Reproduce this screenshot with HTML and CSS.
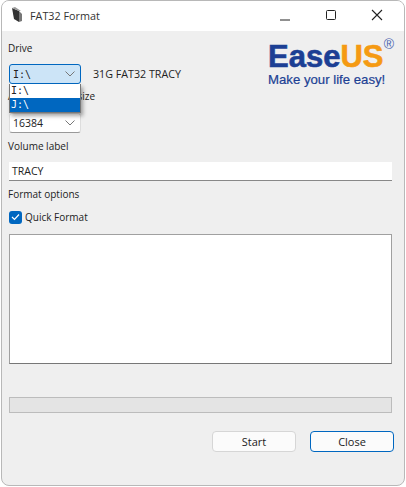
FILE: index.html
```html
<!DOCTYPE html>
<html lang="en">
<head>
    <meta charset="UTF-8">
    <title>FAT32 Format</title>
    <link rel="stylesheet" href="styles.css">
</head>
<body>
    <div class="window">
        <div class="titlebar">
            <svg class="app-icon" width="14" height="16" viewBox="0 0 14 16">
                <path d="M2 1l7 3v11l-5-3z" fill="#333"/>
                <path d="M9 4l3 3v7l-3 1z" fill="#777"/>
                <path d="M2 1l3-1 6 4-2 0z" fill="#999"/>
            </svg>
            <span class="title">FAT32 Format</span>
            <div class="controls">
                <svg width="46" height="16" viewBox="0 0 46 16"><path d="M18 15h10" stroke="#222" stroke-width="1"/></svg>
                <svg width="46" height="16" viewBox="0 0 46 16"><rect x="18.5" y="5.5" width="9" height="9" rx="1" fill="none" stroke="#222"/></svg>
                <svg width="46" height="16" viewBox="0 0 46 16"><path d="M18 5l10 10M28 5l-10 10" stroke="#222" stroke-width="1.1" fill="none"/></svg>
            </div>
        </div>
        <div class="content">
            <div class="top">
                <div class="top-left">
                    <label class="drive-label">Drive</label>
                    <div class="drive-row">
                        <div class="combo-wrap">
                            <div class="combo combo-open">
                                <span class="mono">I:\</span>
                                <svg width="10" height="6" viewBox="0 0 10 6"><path d="M0.5 0.5l4.5 4.5 4.5-4.5" fill="none" stroke="#777"/></svg>
                            </div>
                            <div class="dropdown">
                                <div class="option mono">I:\</div>
                                <div class="option option-on mono">J:\</div>
                            </div>
                        </div>
                        <span class="drive-info">31G FAT32 TRACY</span>
                    </div>
                    <label class="cluster-label">Allocation unit size</label>
                    <div class="combo combo-small">
                        <span>16384</span>
                        <svg width="10" height="6" viewBox="0 0 10 6"><path d="M0.5 0.5l4.5 4.5 4.5-4.5" fill="none" stroke="#777"/></svg>
                    </div>
                </div>
                <div class="logo">
                    <div class="logo-name">Ease<span class="logo-us">US</span><sup class="logo-reg">®</sup></div>
                    <div class="logo-tag">Make your life easy!</div>
                </div>
            </div>
            <label class="volume-label">Volume label</label>
            <div class="text-input">TRACY</div>
            <label class="options-label">Format options</label>
            <div class="check-row">
                <span class="checkbox">
                    <svg width="9" height="8" viewBox="0 0 9 8"><path d="M1 4l2.5 2.5L8 1.5" fill="none" stroke="#fff" stroke-width="1.2"/></svg>
                </span>
                <span>Quick Format</span>
            </div>
            <div class="log-box"></div>
            <div class="progress"></div>
            <div class="buttons">
                <button class="btn">Start</button>
                <button class="btn btn-default">Close</button>
            </div>
        </div>
    </div>
</body>
</html>
```

FILE: styles.css
```css
* {
    box-sizing: border-box;
}
body {
    margin: 0;
    background: #fff;
    font-family: "Open Sans", "Noto Sans", sans-serif;
    font-size: 10px;
    color: #222;
}
.window {
    width: 404px;
    height: 486px;
    margin-left: 1px;
    border: 1px solid #b8b8b8;
    border-radius: 8px;
    overflow: hidden;
    background: #efefef;
}
.titlebar {
    display: flex;
    align-items: center;
    height: 30px;
    background: #fff;
    padding-left: 8px;
}
.app-icon {
    margin-right: 6px;
    margin-bottom: 3px;
}
.title {
    font-size: 10.8px;
    color: #333;
    margin-bottom: 2px;
}
.controls {
    margin-left: auto;
    display: flex;
    padding: 0 4px 6px 0;
}
.content {
    padding: 0 12px 0 6px;
}
.top {
    display: flex;
    justify-content: space-between;
}
.top-left {
    flex: 1;
}
.drive-label {
    display: block;
    margin-top: 10px;
    line-height: 15px;
}
.drive-row {
    display: flex;
    align-items: center;
    margin-top: 8px;
}
.combo-wrap {
    position: relative;
    margin-left: 1px;
}
.combo {
    display: flex;
    align-items: center;
    justify-content: space-between;
    width: 72px;
    height: 20px;
    padding: 0 5px 0 3px;
    background: #fff;
    border: 1px solid #ddd;
    border-bottom-color: #999;
    border-radius: 3px;
}
.combo-open {
    background: #cce4f7;
    border: 1px solid #0067c0;
}
.combo-small {
    margin: 9px 0 0 1px;
    padding-left: 3px;
    font-size: 10.5px;
}
.mono {
    font-family: "DejaVu Sans Mono", "Liberation Mono", monospace;
    font-size: 10px;
}
.dropdown {
    position: absolute;
    top: 20px;
    left: 0;
    width: 72px;
    background: #fff;
    border: 1px solid #777;
    border-top: none;
    box-shadow: 2px 3px 4px rgba(0, 0, 0, 0.35);
}
.option {
    height: 14px;
    line-height: 14px;
    padding-left: 1px;
}
.option-on {
    background: #0067c0;
    color: #fff;
}
.drive-info {
    margin-left: 12px;
    font-size: 10.7px;
}
.cluster-label {
    display: block;
    margin-top: 5px;
    line-height: 15px;
}
.logo {
    width: 125px;
    margin: 12px -1px 0 0;
    color: #1c3f94;
}
.logo-name {
    position: relative;
    font-family: "Liberation Sans", Arial, sans-serif;
    font-weight: bold;
    font-size: 31px;
    line-height: 28px;
    -webkit-text-stroke: 0.6px currentColor;
}
.logo-us {
    color: #f59a12;
}
.logo-reg {
    position: absolute;
    top: -6px;
    right: -1px;
    font-size: 14px;
    line-height: 14px;
    font-weight: normal;
    -webkit-text-stroke: 0;
    color: #4a64b0;
}
.logo-tag {
    margin-top: 1px;
    font-family: "Liberation Sans", Arial, sans-serif;
    font-size: 13.2px;
    line-height: 15px;
    white-space: nowrap;
    -webkit-text-stroke: 0.2px currentColor;
}
.volume-label {
    display: block;
    margin-top: 6px;
    line-height: 15px;
}
.text-input {
    height: 19px;
    margin: 8px 0 0 1px;
    padding-left: 3px;
    font-size: 10.5px;
    line-height: 18px;
    background: #fff;
    border-bottom: 1px solid #888;
}
.options-label {
    display: block;
    margin-top: 6px;
    line-height: 15px;
}
.check-row {
    display: flex;
    align-items: center;
    gap: 3px;
    height: 14px;
    margin: 8px 0 0 1px;
}
.checkbox {
    display: flex;
    align-items: center;
    justify-content: center;
    width: 13px;
    height: 13px;
    background: #0067c0;
    border-radius: 3px;
}
.log-box {
    height: 130px;
    margin: 10px 0 0 1px;
    background: #fff;
    border: 1px solid #a0a0a0;
    border-bottom-color: #777;
}
.progress {
    height: 16px;
    margin: 33px 0 0 1px;
    background: #e4e4e4;
    border: 1px solid #bcbcbc;
}
.buttons {
    display: flex;
    justify-content: flex-end;
    gap: 14px;
    margin: 18px -2px 0 0;
}
.btn {
    width: 84px;
    height: 21px;
    padding: 0;
    font-family: inherit;
    font-size: 11px;
    color: #222;
    background: #fbfbfb;
    border: 1px solid #d6d6d6;
    border-radius: 4px;
}
.btn-default {
    border-color: #0067c0;
}
```
